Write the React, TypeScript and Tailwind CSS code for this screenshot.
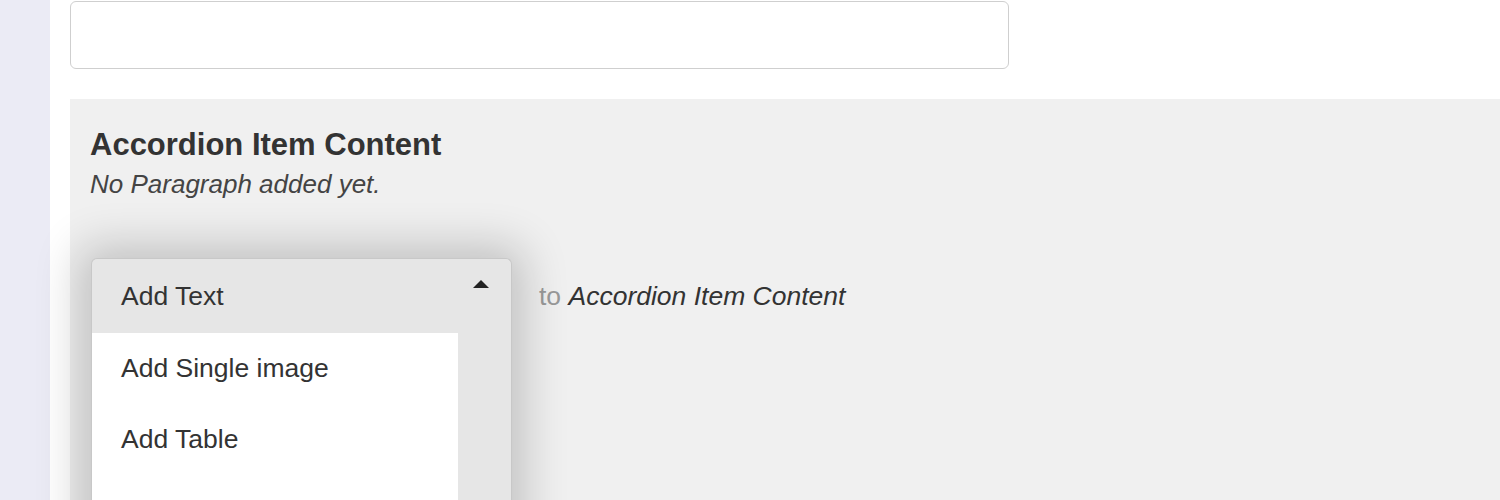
import React from "react";

export default function App() {
  return (
    <div className="flex h-[500px] w-[1500px] overflow-hidden bg-white" style={{ fontFamily: '"Liberation Sans", Arial, sans-serif' }}>
      <div className="w-[50px] shrink-0 bg-[#ebebf5]" />
      <div className="flex min-w-0 flex-1 flex-col pl-[20px] pt-[1px]">
        <div className="h-[68px] w-[939px] shrink-0 rounded-[6px] border border-[#cfcfcf] bg-white" />
        <div className="mt-[30px] flex flex-1 flex-col bg-[#f0f0f0] pl-[20px] pt-[27px]">
          <h2 className="text-[31px] leading-[38px] font-bold text-[#333]">Accordion Item Content</h2>
          <p className="mt-[5px] text-[26px] leading-[30px] italic text-[#444]">No Paragraph added yet.</p>
          <div className="mt-[59px] flex items-start">
            <div className="relative ml-[1px] w-[421px] rounded-t-[6px] border border-b-0 border-[#c8c8c8] bg-[#e6e6e6] shadow-[0_0_45px_12px_rgba(0,0,0,0.2)]">
              <div className="flex h-[74px] items-center justify-between pl-[29px] pr-[22px] pt-[2px]">
                <span className="text-[26.5px] text-[#333]">Add Text</span>
                <svg width="16" height="10" viewBox="0 0 16 10" className="mb-[26px]">
                  <polygon points="0,9 16,9 8,1" fill="#222" />
                </svg>
              </div>
              <div className="w-[366px] bg-white">
                <div className="flex h-[71px] items-center pl-[29px] text-[26.5px] text-[#333]">Add Single image</div>
                <div className="flex h-[71px] items-center pl-[29px] text-[26.5px] text-[#333]">Add Table</div>
                <div className="h-[71px]" />
              </div>
            </div>
            <div className="ml-[27px] flex h-[76px] items-center pt-[2px] text-[26.5px]">
              <span className="text-[#999]">to&nbsp;</span>
              <span className="italic text-[#333]">Accordion Item Content</span>
            </div>
          </div>
        </div>
      </div>
    </div>
  );
}
